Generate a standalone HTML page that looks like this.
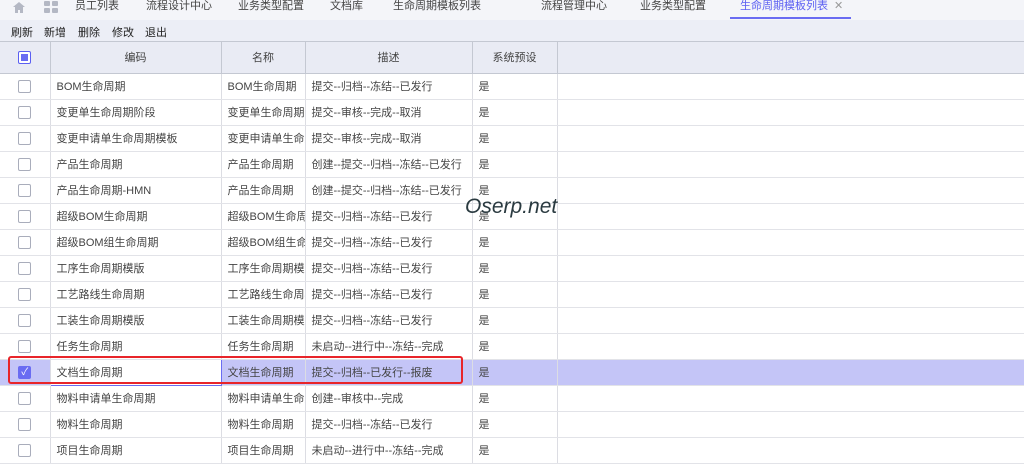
<!DOCTYPE html>
<html><head><meta charset="utf-8"><style>
*{margin:0;padding:0;box-sizing:border-box}
body{width:1024px;height:448px;overflow:hidden;background:#fff;font-family:"Liberation Sans","Noto Sans CJK SC",sans-serif;font-size:11px;color:#333;position:relative}
.tabs{position:absolute;left:0;top:0;width:1024px;height:20px;background:#f4f5f9}
.tab{position:absolute;top:0;font-size:11px;color:#444;line-height:13px}
.toolbar{position:absolute;left:0;top:20px;width:1024px;height:22px;background:#eceef6;border-bottom:1px solid #c4c8d2}
.toolbar span{position:absolute;top:4px;font-size:11px;color:#222}
table{position:absolute;left:0;top:42px;width:1024px;border-collapse:collapse;table-layout:fixed}
td{height:26px;border-right:1px solid #dcdde3;border-bottom:1px solid #e2e3e8;padding-left:6px;white-space:nowrap;overflow:hidden;font-size:11px;color:#444}
tr.h td{height:31px;background:#e9ebf4;border-right:1px solid #c4c8d2;border-bottom:1px solid #c4c8d2;text-align:center;padding:0;color:#444}
td.c{padding:0;text-align:center}
.cb{display:inline-block;width:13px;height:13px;border:1px solid #a9adbb;background:#fff;border-radius:2px;vertical-align:middle}
tr.sel td{background:#c4c5f7}
</style></head><body>
<div class="tabs">
<svg style="position:absolute;left:13px;top:2px" width="12" height="11"><path d="M6 0L0 5h2v6h3V8h2v3h3V5h2z" fill="#b4b8c4"/></svg>
<svg style="position:absolute;left:44px;top:1px" width="14" height="13"><rect x="0" y="0" width="6" height="5" rx="1" fill="#b4b8c4"/><rect x="8" y="0" width="6" height="5" rx="1" fill="#b4b8c4"/><rect x="0" y="7" width="6" height="5" rx="1" fill="#b4b8c4"/><rect x="8" y="7" width="6" height="5" rx="1" fill="#b4b8c4"/></svg>
<span class="tab" style="left:75px">员工列表</span>
<span class="tab" style="left:146px">流程设计中心</span>
<span class="tab" style="left:238px">业务类型配置</span>
<span class="tab" style="left:330px">文档库</span>
<span class="tab" style="left:393px">生命周期模板列表</span>
<span class="tab" style="left:541px">流程管理中心</span>
<span class="tab" style="left:640px">业务类型配置</span>
<span class="tab" style="left:740px;color:#5b5ff2">生命周期模板列表</span>
<span class="tab" style="left:834px;color:#999">✕</span>
<div style="position:absolute;left:730px;top:17px;width:121px;height:2px;background:#6a6cf2"></div>
</div>
<div class="toolbar"><span style="left:11px">刷新</span><span style="left:44px">新增</span><span style="left:78px">删除</span><span style="left:112px">修改</span><span style="left:145px">退出</span></div>
<table>
<colgroup><col style="width:50px"><col style="width:171px"><col style="width:84px"><col style="width:167px"><col style="width:85px"><col style="width:467px"></colgroup>
<tr class="h"><td><span class="cb" style="border-color:#5b5ff2;background:#fff;position:relative"><span style="position:absolute;left:2px;top:2px;width:7px;height:7px;background:#6a6cf2"></span></span></td><td>编码</td><td>名称</td><td>描述</td><td>系统预设</td><td></td></tr>
<tr><td class="c"><span class="cb"></span></td><td>BOM生命周期</td><td>BOM生命周期</td><td>提交--归档--冻结--已发行</td><td>是</td><td></td></tr>
<tr><td class="c"><span class="cb"></span></td><td>变更单生命周期阶段</td><td>变更单生命周期阶</td><td>提交--审核--完成--取消</td><td>是</td><td></td></tr>
<tr><td class="c"><span class="cb"></span></td><td>变更申请单生命周期模板</td><td>变更申请单生命周期</td><td>提交--审核--完成--取消</td><td>是</td><td></td></tr>
<tr><td class="c"><span class="cb"></span></td><td>产品生命周期</td><td>产品生命周期</td><td>创建--提交--归档--冻结--已发行</td><td>是</td><td></td></tr>
<tr><td class="c"><span class="cb"></span></td><td>产品生命周期-HMN</td><td>产品生命周期</td><td>创建--提交--归档--冻结--已发行</td><td>是</td><td></td></tr>
<tr><td class="c"><span class="cb"></span></td><td>超级BOM生命周期</td><td>超级BOM生命周期</td><td>提交--归档--冻结--已发行</td><td>是</td><td></td></tr>
<tr><td class="c"><span class="cb"></span></td><td>超级BOM组生命周期</td><td>超级BOM组生命周期</td><td>提交--归档--冻结--已发行</td><td>是</td><td></td></tr>
<tr><td class="c"><span class="cb"></span></td><td>工序生命周期模版</td><td>工序生命周期模版</td><td>提交--归档--冻结--已发行</td><td>是</td><td></td></tr>
<tr><td class="c"><span class="cb"></span></td><td>工艺路线生命周期</td><td>工艺路线生命周期</td><td>提交--归档--冻结--已发行</td><td>是</td><td></td></tr>
<tr><td class="c"><span class="cb"></span></td><td>工装生命周期模版</td><td>工装生命周期模版</td><td>提交--归档--冻结--已发行</td><td>是</td><td></td></tr>
<tr><td class="c"><span class="cb"></span></td><td>任务生命周期</td><td>任务生命周期</td><td>未启动--进行中--冻结--完成</td><td>是</td><td></td></tr>
<tr class="sel"><td class="c"><span class="cb" style="background:#6a6cf2;border-color:#6a6cf2;color:#fff;font-size:10px;line-height:11px">✓</span></td><td style="background:#fff;border:1px solid #6a6cf2">文档生命周期</td><td>文档生命周期</td><td>提交--归档--已发行--报废</td><td>是</td><td></td></tr>
<tr><td class="c"><span class="cb"></span></td><td>物料申请单生命周期</td><td>物料申请单生命周</td><td>创建--审核中--完成</td><td>是</td><td></td></tr>
<tr><td class="c"><span class="cb"></span></td><td>物料生命周期</td><td>物料生命周期</td><td>提交--归档--冻结--已发行</td><td>是</td><td></td></tr>
<tr><td class="c"><span class="cb"></span></td><td>项目生命周期</td><td>项目生命周期</td><td>未启动--进行中--冻结--完成</td><td>是</td><td></td></tr>
</table>
<div style="position:absolute;left:8px;top:356px;width:455px;height:28px;border:2px solid #e8252a;border-radius:3px"></div>
<div style="position:absolute;left:465px;top:195px;font-size:21px;font-style:italic;color:#2a3a40;font-family:'Liberation Sans',sans-serif">Oserp.net</div>
</body></html>
